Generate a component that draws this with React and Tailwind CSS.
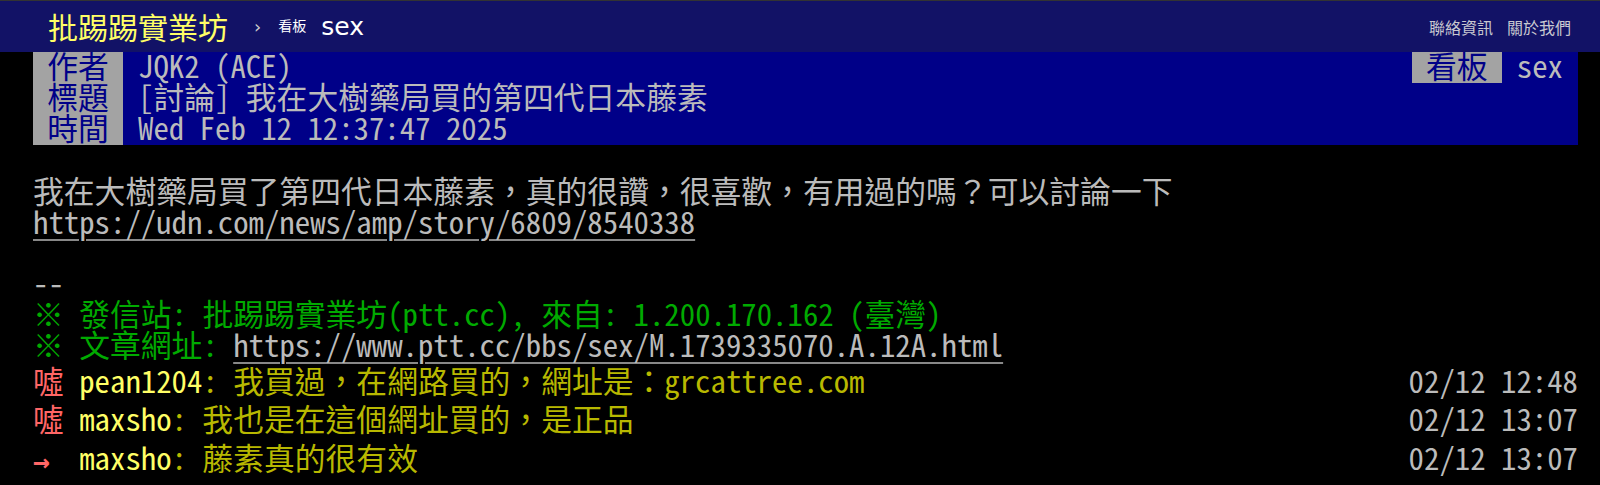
import React from "react";

const mono = "font-['Noto_Sans_Mono_CJK_TC','DejaVu_Sans_Mono','Noto_Sans_CJK_TC',monospace]";

const pushes = [
  { tag: "噓", user: "pean1204", content: ": 我買過，在網路買的，網址是：grcattree.com", time: "02/12 12:48" },
  { tag: "噓", user: "maxsho", content: ": 我也是在這個網址買的，是正品", time: "02/12 13:07" },
  { tag: "→", user: "maxsho", content: ": 藤素真的很有效", time: "02/12 13:07" },
];

function MetaLine({ tag, value, right }) {
  return (
    <div className="flex h-[31px] leading-[26px] bg-[#000088]">
      <span className="w-[90px] shrink-0 bg-[#a3a3a3] text-[#000088] text-center">{tag}</span>
      <span className="flex-1 pl-[15px] text-[#bbbbbb] whitespace-pre">{value}</span>
      {right && (
        <>
          <span className="w-[90px] shrink-0 bg-[#a3a3a3] text-[#000088] text-center">{right[0]}</span>
          <span className="pl-[15px] pr-[15px] text-[#bbbbbb]">{right[1]}</span>
        </>
      )}
    </div>
  );
}

export default function App() {
  return (
    <div className="w-[1600px] h-[485px] overflow-hidden bg-black">
      {/* top bar */}
      <div className="h-[52px] border-t border-[#333333] bg-[#121266] flex items-center justify-between pl-[48px] pr-[29px] font-['DejaVu_Sans','Noto_Sans_CJK_TC',sans-serif]">
        <div className="flex items-center">
          <span className="text-[30px] text-[#ffff66] font-['Noto_Sans_CJK_TC',sans-serif]">批踢踢實業坊</span>
          <span className="ml-[26px] text-[18px] text-[#cccccc]">›</span>
          <span className="ml-[17px] text-[14px] text-white">看板</span>
          <span className="ml-[15px] text-[25px] text-white">sex</span>
        </div>
        <div className="flex gap-[14px] text-[16px] text-[#c8c8d0] font-['Noto_Sans_CJK_TC',sans-serif]">
          <span>聯絡資訊</span>
          <span>關於我們</span>
        </div>
      </div>

      <div className={`ml-[33px] w-[1545px] text-[30.8px] ${mono}`}>
        <MetaLine tag="作者" value="JQK2 (ACE)" right={["看板", "sex"]} />
        <MetaLine tag="標題" value="[討論] 我在大樹藥局買的第四代日本藤素" />
        <MetaLine tag="時間" value="Wed Feb 12 12:37:47 2025" />

        <div className="text-[#bbbbbb] leading-[27px] whitespace-pre">
          <div className="h-[30.8px]"> </div>
          <div className="h-[30.8px]">我在大樹藥局買了第四代日本藤素，真的很讚，很喜歡，有用過的嗎？可以討論一下</div>
          <div className="h-[30.8px]">
            <span className="underline decoration-[#888888] decoration-2 underline-offset-[5px]">https://udn.com/news/amp/story/6809/8540338</span>
          </div>
          <div className="h-[30.8px]"> </div>
          <div className="h-[30.8px]">--</div>
          <div className="h-[30.8px] text-[#00aa00]">※ 發信站: 批踢踢實業坊(ptt.cc), 來自: 1.200.170.162 (臺灣)</div>
          <div className="h-[30.8px] text-[#00aa00]">
            ※ 文章網址: <span className="text-[#bbbbbb] underline decoration-[#888888] decoration-2 underline-offset-[5px]">https://www.ptt.cc/bbs/sex/M.1739335070.A.12A.html</span>
          </div>
        </div>

        <div className="pt-[1px]">
          {pushes.map((p, i) => (
            <div key={i} className="flex h-[38.5px] leading-[36px] whitespace-pre">
              <span className="w-[46.2px] shrink-0 text-[#ff6666]">
                {p.tag === "→" ? (
                  <span className="text-[28px] font-bold font-['DejaVu_Sans_Mono',monospace] align-middle">→</span>
                ) : (
                  p.tag
                )}
              </span>
              <span className="text-[#ffff66]">{p.user}</span>
              <span className="flex-1 text-[#b8b800]">{p.content}</span>
              <span className="text-[#bbbbbb]">{p.time}</span>
            </div>
          ))}
        </div>
      </div>
    </div>
  );
}
